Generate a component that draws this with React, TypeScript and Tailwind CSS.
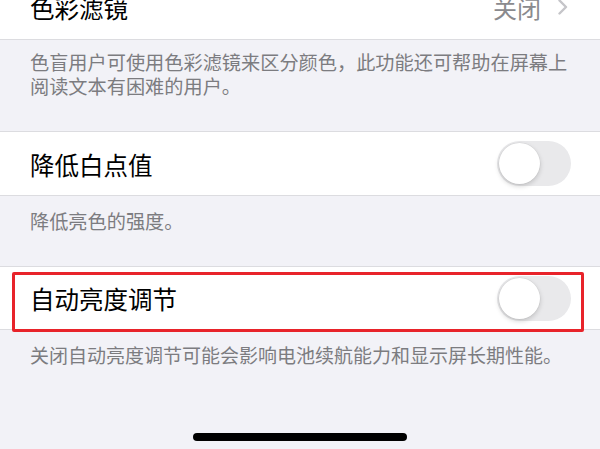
import React from "react";

const font = '"Noto Sans CJK SC", "Noto Sans", sans-serif';

function Toggle() {
  return (
    <div className="relative w-[74px] h-[45px] rounded-full bg-[#e9e9eb] shrink-0">
      <div className="absolute left-[2px] top-[2px] w-[41px] h-[41px] rounded-full bg-white shadow-[0_2px_5px_rgba(0,0,0,0.18),0_0_0_0.5px_rgba(0,0,0,0.06)]" />
    </div>
  );
}

export default function App() {
  return (
    <div
      className="w-[600px] h-[449px] bg-[#f2f2f7] overflow-hidden flex flex-col"
      style={{ fontFamily: font }}
    >
      {/* Row 1 */}
      <div className="-mt-[25px] h-[65px] shrink-0 bg-white border-b border-[#dcdce0] flex items-center justify-between pl-[30px] pr-[32px]">
        <span className="text-[24.5px] text-black leading-none pt-[2px]">色彩滤镜</span>
        <div className="flex items-center gap-[17px]">
          <span className="text-[24px] text-[#8a8a8e] leading-none pt-[2px]">关闭</span>
          <svg width="10" height="16" viewBox="0 0 10 16" fill="none">
            <path d="M1.5 1.5 L8 8 L1.5 14.5" stroke="#c5c5c9" strokeWidth="2.4" strokeLinecap="round" strokeLinejoin="round" />
          </svg>
        </div>
      </div>

      {/* Desc 1 */}
      <div className="h-[91px] shrink-0 pt-[10px] pl-[30px] pr-[30px] text-[19.2px] leading-[24px] text-[#7c7c80]">
        色盲用户可使用色彩滤镜来区分颜色，此功能还可帮助在屏幕上阅读文本有困难的用户。
      </div>

      {/* Row 2 */}
      <div className="h-[65px] shrink-0 bg-white border-y border-[#dcdce0] flex items-center justify-between pl-[30px] pr-[29px]">
        <span className="text-[24.5px] text-black leading-none pt-[3px]">降低白点值</span>
        <Toggle />
      </div>

      {/* Desc 2 */}
      <div className="h-[70px] shrink-0 pt-[13px] px-[30px] text-[19.2px] leading-[24px] text-[#7c7c80]">
        降低亮色的强度。
      </div>

      {/* Row 3 */}
      <div className="relative h-[64px] shrink-0 bg-white border-y border-[#dcdce0] flex items-center justify-between pl-[30px] pr-[29px]">
        <span className="text-[24.5px] text-black leading-none pt-[3px]">自动亮度调节</span>
        <Toggle />
        <div className="absolute left-[12px] right-[16px] top-[5px] -bottom-[3px] border-[3px] border-[#e8232a] rounded-[2px]" />
      </div>

      {/* Desc 3 */}
      <div className="pt-[13px] px-[30px] text-[19px] leading-[24px] text-[#7c7c80]">
        关闭自动亮度调节可能会影响电池续航能力和显示屏长期性能。
      </div>

      <div className="flex-1" />
      <div className="flex justify-center pb-[8px]">
        <div className="w-[214px] h-[8px] rounded-full bg-black" />
      </div>
    </div>
  );
}
